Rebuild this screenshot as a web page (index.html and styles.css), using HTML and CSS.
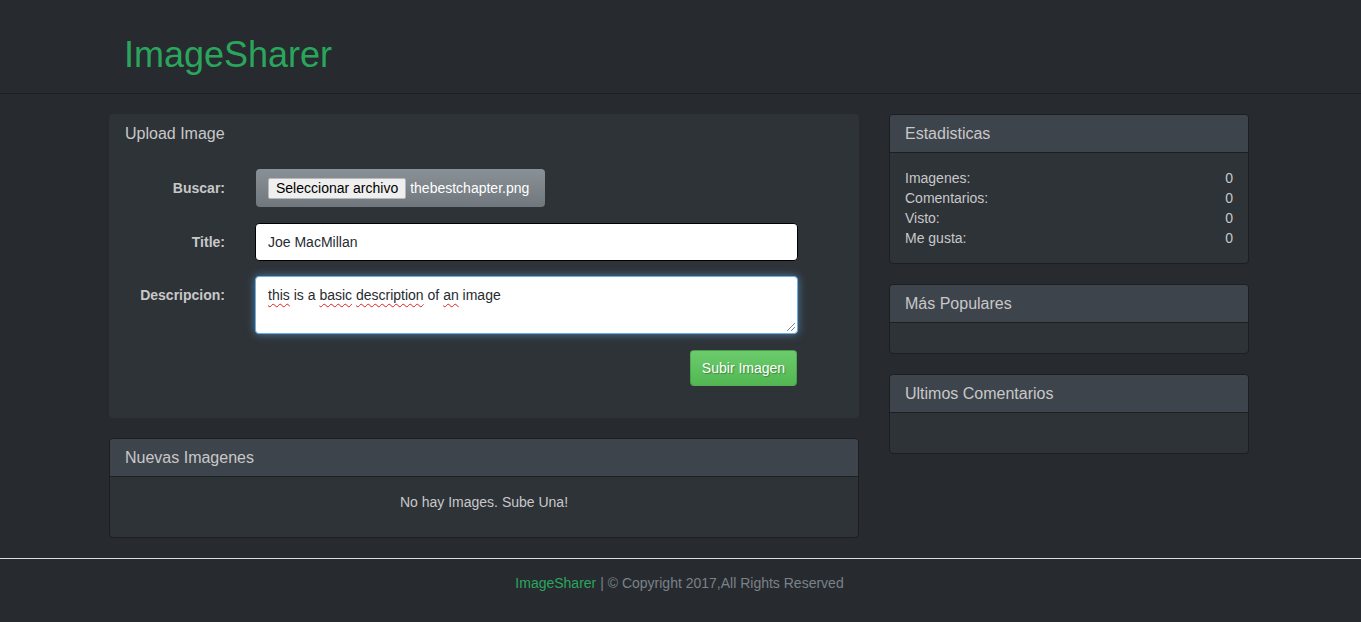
FILE: index.html
```html
<!DOCTYPE html>
<html lang="es">
<head>
<meta charset="utf-8">
<title>ImageSharer</title>
<link rel="stylesheet" href="styles.css">
</head>
<body>
<header class="site-header">
  <div class="wrap">
    <h1 class="brand">ImageSharer</h1>
  </div>
</header>

<main class="wrap layout">
  <div class="col-main">
    <section class="upload-panel">
      <h3 class="upload-title">Upload Image</h3>
      <form class="upload-form">
        <div class="form-row row-file">
          <label class="form-label">Buscar:</label>
          <div class="file-box">
            <span class="file-btn">Seleccionar archivo</span>
            <span class="file-name">thebestchapter.png</span>
          </div>
        </div>
        <div class="form-row">
          <label class="form-label">Title:</label>
          <div class="text-input">Joe MacMillan</div>
        </div>
        <div class="form-row">
          <label class="form-label">Descripcion:</label>
          <div class="text-area"><span class="misspelled">this</span> is a <span class="misspelled">basic</span> <span class="misspelled">description</span> of <span class="misspelled">an</span> image<span class="grip"></span></div>
        </div>
        <div class="form-actions">
          <button type="button" class="btn-success">Subir Imagen</button>
        </div>
      </form>
    </section>

    <section class="panel">
      <div class="panel-heading">Nuevas Imagenes</div>
      <div class="panel-body">
        <p class="empty-msg">No hay Images. Sube Una!</p>
      </div>
    </section>
  </div>

  <aside class="col-side">
    <section class="panel">
      <div class="panel-heading">Estadisticas</div>
      <div class="panel-body">
        <div class="stat-row"><span>Imagenes:</span><span>0</span></div>
        <div class="stat-row"><span>Comentarios:</span><span>0</span></div>
        <div class="stat-row"><span>Visto:</span><span>0</span></div>
        <div class="stat-row"><span>Me gusta:</span><span>0</span></div>
      </div>
    </section>
    <section class="panel">
      <div class="panel-heading">Más Populares</div>
      <div class="panel-body"></div>
    </section>
    <section class="panel">
      <div class="panel-heading">Ultimos Comentarios</div>
      <div class="panel-body"><div class="spacer"></div></div>
    </section>
  </aside>
</main>

<footer class="site-footer">
  <p><span class="foot-brand">ImageSharer</span> | © Copyright 2017,All Rights Reserved</p>
</footer>
</body>
</html>
```

FILE: styles.css
```css
* { box-sizing: border-box; }
html, body {
  margin: 0;
  padding: 0;
  background: #272b30;
  color: #c8c8c8;
  font-family: "Liberation Sans", Arial, sans-serif;
  font-size: 14px;
  line-height: 20px;
}
.wrap {
  width: 1140px;
  margin-left: 109px;
}
.site-header {
  border-bottom: 1px solid #1c1e22;
  height: 94px;
}
.brand {
  margin: 0;
  padding: 35px 15px 0;
  font-size: 36px;
  line-height: 40px;
  font-weight: 400;
  color: #2aa65c;
}
.layout {
  display: flex;
  gap: 30px;
  padding-top: 20px;
}
.col-main { width: 750px; }
.col-side { width: 360px; }

.upload-panel {
  background: #2e3338;
  border-radius: 4px;
  height: 304px;
  margin-bottom: 20px;
}
.upload-title {
  margin: 0;
  padding: 11px 16px 0;
  font-size: 16px;
  line-height: 18px;
  font-weight: 400;
  color: #c8c8c8;
  height: 38px;
}
.upload-form {
  padding-top: 17px;
}
.form-row {
  display: flex;
  gap: 30px;
  margin-bottom: 15px;
}
.row-file { margin-bottom: 16px; }
.form-label {
  width: 116px;
  text-align: right;
  font-weight: 700;
  padding-top: 9px;
  color: #c8c8c8;
}
.file-box {
  width: 289px;
  height: 38px;
  margin-left: 1px;
  border-radius: 4px;
  background: linear-gradient(#8a9196, #7a8288 60%, #70787d);
  display: flex;
  align-items: center;
  padding-left: 12px;
  color: #fff;
}
.file-btn {
  background: #efefef;
  color: #000;
  border: 1px solid #b8b8b8;
  border-radius: 2px;
  height: 21px;
  line-height: 19px;
  padding: 0 7px;
  margin-right: 4px;
}
.text-input {
  width: 543px;
  height: 38px;
  background: #fff;
  border: 1px solid #000;
  border-radius: 4px;
  padding: 8px 12px;
  color: #272b30;
}
.text-area {
  position: relative;
  width: 543px;
  height: 58px;
  background: #fff;
  border: 1px solid #66afe9;
  border-radius: 4px;
  padding: 8px 12px;
  color: #272b30;
  box-shadow: 0 0 8px rgba(102, 175, 233, 0.6);
}
.misspelled {
  text-decoration: underline wavy #e02020;
  text-decoration-thickness: 1px;
  text-underline-offset: 3px;
}
.grip {
  position: absolute;
  right: 2px;
  bottom: 2px;
  width: 8px;
  height: 8px;
  background: linear-gradient(135deg, transparent 45%, #888 45%, #888 55%, transparent 55%, transparent 70%, #888 70%, #888 80%, transparent 80%);
}
.form-actions {
  display: flex;
  justify-content: flex-end;
  width: 688px;
  padding-top: 1px;
}
.btn-success {
  width: 107px;
  height: 36px;
  border: 1px solid rgba(0, 0, 0, 0.15);
  border-radius: 4px;
  background: linear-gradient(#6ccb6c, #5cc05c 60%, #52b752);
  color: #fff;
  font-family: inherit;
  font-size: 14px;
  text-shadow: 1px 1px 1px rgba(0, 0, 0, 0.3);
  padding: 0;
}

.panel {
  background: #2e3338;
  border: 1px solid #1c1e22;
  border-radius: 4px;
  margin-bottom: 20px;
}
.panel-heading {
  background: #3e444c;
  border-bottom: 1px solid #1c1e22;
  border-radius: 3px 3px 0 0;
  padding: 10px 15px;
  font-size: 16px;
  line-height: 17px;
  color: #c8c8c8;
}
.panel-body {
  padding: 15px;
}
.empty-msg {
  margin: 0 0 10px;
  text-align: center;
}
.stat-row {
  display: flex;
  justify-content: space-between;
}
.spacer { height: 10px; }

.site-footer {
  border-top: 1px solid #dddddd;
  height: 70px;
}
.site-footer p {
  margin: 0;
  padding-top: 14px;
  padding-right: 2px;
  text-align: center;
  color: #7a8288;
}
.foot-brand { color: #2aa65c; }
```
